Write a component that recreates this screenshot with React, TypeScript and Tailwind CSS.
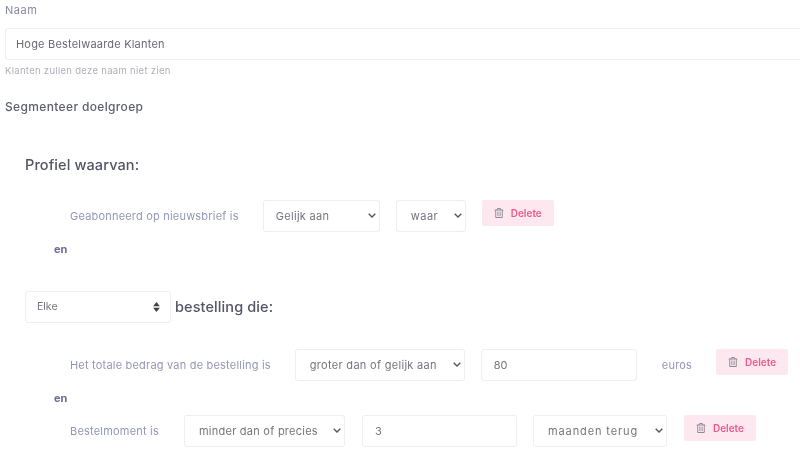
import { FaRegTrashAlt } from 'react-icons/fa';

const font = "font-['Inter','Liberation_Sans',sans-serif]";

const inputClass =
  'h-8 rounded-[3px] border border-[#eeeef3] bg-white px-3 text-[11px] text-[#74757f] outline-none';

const Select = ({ value, className, textClass }: { value: string; className: string; textClass: string }) => (
  <div className={`relative h-8 shrink-0 ${className}`}>
    <select
      defaultValue={value}
      className={`h-full w-full appearance-none rounded-[3px] border border-[#eeeef3] bg-white text-[11px] text-[#74757f] outline-none ${textClass}`}
    >
      <option>{value}</option>
    </select>
    <svg viewBox="0 0 8 5" className="absolute top-[13px] right-1 h-[5px] w-2 fill-none stroke-[#55565f] stroke-[1.4]">
      <path d="M.7.7 4 4l3.3-3.3" />
    </svg>
  </div>
);

const DeleteButton = () => (
  <button className="flex h-[26px] w-[72px] shrink-0 items-center justify-center gap-[7px] rounded-[2px] bg-[#fde8ef] text-[10px] font-semibold text-[#ec5a8c]">
    <FaRegTrashAlt className="h-[10px] w-[10px] text-[#8f8a94]" />
    Delete
  </button>
);

const RowLabel = ({ children, className }: { children: string; className: string }) => (
  <span className={`text-[11px] tracking-[0.2px] text-[#9497b6] ${className}`}>{children}</span>
);

const Conjunction = ({ className }: { className: string }) => (
  <div className={`pl-[49px] text-[11px] leading-4 font-bold text-[#6b6d98] ${className}`}>en</div>
);

export default function App() {
  return (
    <div className={`h-[457px] w-[800px] overflow-hidden bg-white pl-[5px] blur-[0.3px] ${font}`}>
      <label className="block pt-[2px] text-[11px] leading-4 tracking-[0.5px] text-[#85889f]">Naam</label>
      <input
        readOnly
        value="Hoge Bestelwaarde Klanten"
        className="mt-[10px] h-8 w-[800px] rounded-[3px] border border-[#eeeef3] bg-white px-[10px] text-[11px] tracking-[0.2px] text-[#6a6b76] outline-none"
      />
      <p className="mt-[3px] text-[9.5px] leading-4 tracking-[0.3px] text-[#aeb0ba]">Klanten zullen deze naam niet zien</p>
      <h3 className="mt-5 text-xs leading-4 font-medium tracking-[0.35px] text-[#5d5e70]">Segmenteer doelgroep</h3>

      <h2 className="mt-[40px] pl-5 text-[14.5px] leading-5 font-medium tracking-[0.1px] text-[#535465]">Profiel waarvan:</h2>

      <div className="mt-[25px] flex items-start pl-[65px]">
        <RowLabel className="mt-2 mr-6">Geabonneerd op nieuwsbrief is</RowLabel>
        <Select value="Gelijk aan" className="mr-4 w-[117px]" textClass="pl-3 tracking-[0.3px]" />
        <Select value="waar" className="mr-4 w-[70px]" textClass="pl-[14px] tracking-[0.5px]" />
        <DeleteButton />
      </div>
      <Conjunction className="mt-[9px]" />

      <div className="mt-[34px] flex items-center pl-5">
        <div className="relative h-8 w-[146px]">
          <select
            defaultValue="Elke"
            className="h-full w-full appearance-none rounded-[3px] border border-[#eeeef3] bg-white pl-[11px] text-[10.5px] text-[#74757f] outline-none"
          >
            <option>Elke</option>
          </select>
          <svg viewBox="0 0 8 12" className="absolute top-[11px] right-[11px] h-[10px] w-[7px] fill-[#3e3f4a]">
            <path d="M4 0 8 5H0zM4 12 0 7h8z" />
          </svg>
        </div>
        <span className="ml-1 text-[14.5px] font-medium tracking-[0.1px] text-[#535465]">bestelling die:</span>
      </div>

      <div className="mt-[26px] flex items-start pl-[65px]">
        <RowLabel className="mt-2 mr-6">Het totale bedrag van de bestelling is</RowLabel>
        <Select value="groter dan of gelijk aan" className="mr-4 w-[170px]" textClass="pl-[14px] tracking-[0.3px]" />
        <input readOnly value="80" className={`${inputClass} mr-[25px] w-[156px]`} />
        <RowLabel className="mt-2 mr-6">euros</RowLabel>
        <DeleteButton />
      </div>
      <Conjunction className="mt-[9px]" />

      <div className="mt-[9px] flex items-start pl-[65px]">
        <RowLabel className="mt-2 mr-[25px]">Bestelmoment is</RowLabel>
        <Select value="minder dan of precies" className="mr-[17px] w-[161px]" textClass="pl-[14px] tracking-[0.25px]" />
        <input readOnly value="3" className={`${inputClass} mr-4 w-[155px]`} />
        <Select value="maanden terug" className="mr-[17px] w-[134px]" textClass="pl-[14px] tracking-[0.9px]" />
        <DeleteButton />
      </div>
    </div>
  );
}
